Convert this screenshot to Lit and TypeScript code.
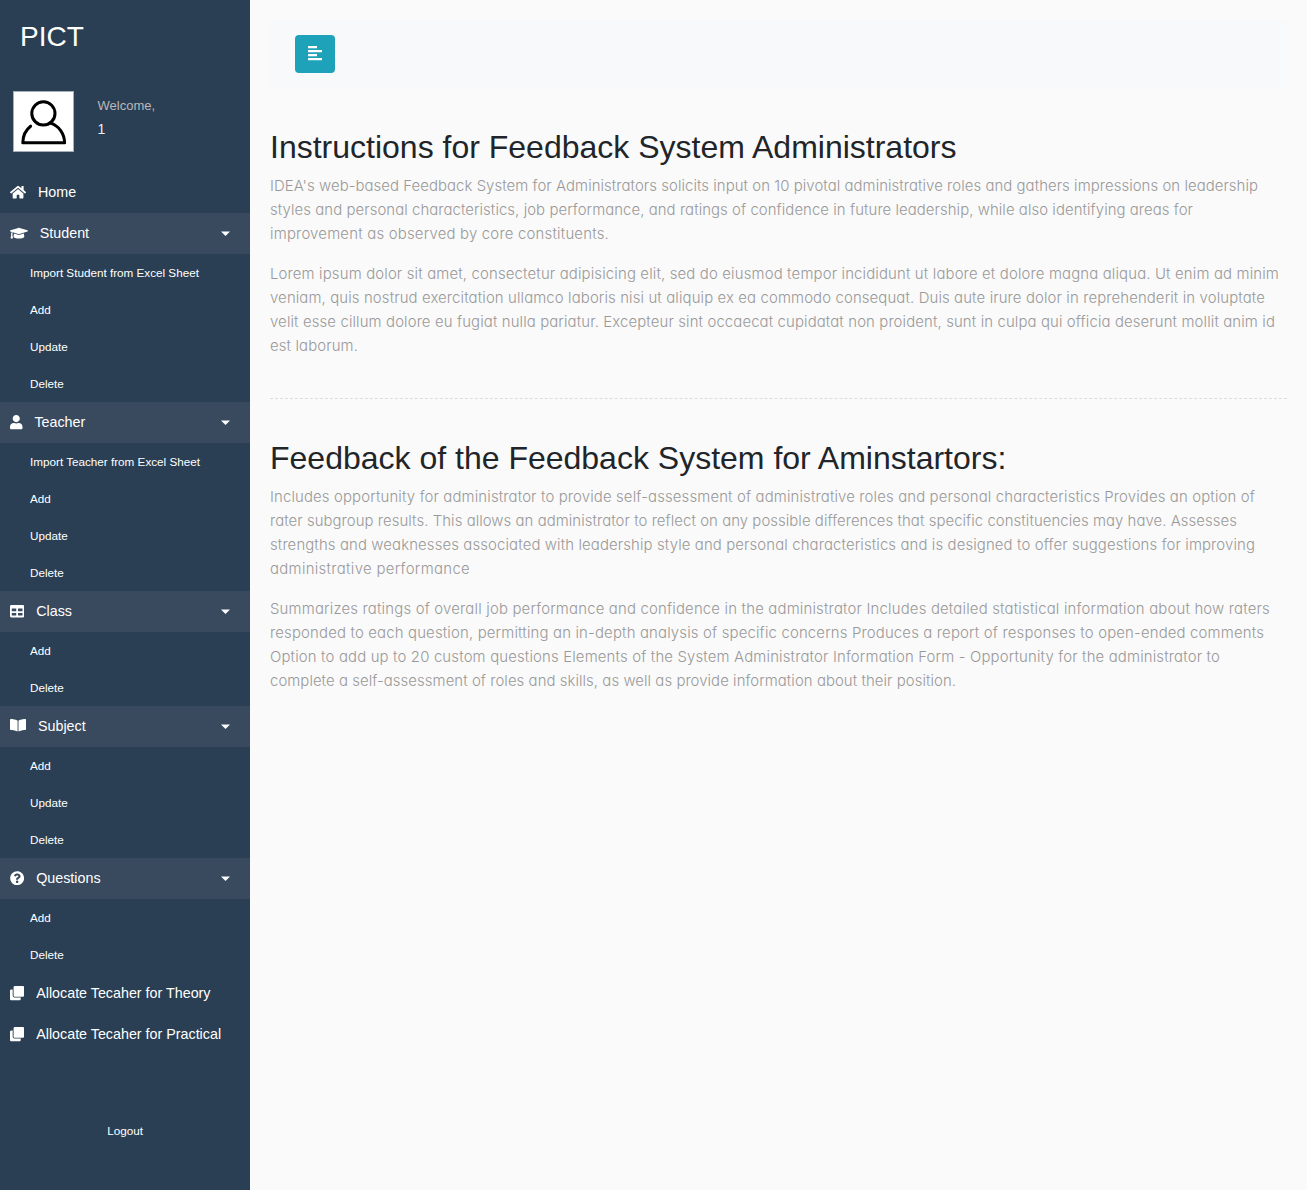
import { LitElement, html, css, svg } from "lit";
import { customElement, property } from "lit/decorators.js";

const ICONS: Record<string, [number, string]> = {
  home: [576, "M280.37 148.26L96 300.11V464a16 16 0 0 0 16 16l112.06-.29a16 16 0 0 0 15.92-16V368a16 16 0 0 1 16-16h64a16 16 0 0 1 16 16v95.64a16 16 0 0 0 16 16.05L464 480a16 16 0 0 0 16-16V300L295.67 148.26a12.19 12.19 0 0 0-15.3 0zM571.6 251.47L488 182.56V44.05a12 12 0 0 0-12-12h-56a12 12 0 0 0-12 12v72.61L318.47 43a48 48 0 0 0-61 0L4.34 251.47a12 12 0 0 0-1.6 16.9l25.5 31A12 12 0 0 0 45.15 301l235.22-193.74a12.19 12.19 0 0 1 15.3 0L530.9 301a12 12 0 0 0 16.9-1.6l25.5-31a12 12 0 0 0-1.7-16.93z"],
  cap: [640, "M622.34 153.2L343.4 67.5c-15.2-4.67-31.6-4.67-46.79 0L17.66 153.2c-23.54 7.23-23.54 38.36 0 45.59l48.63 14.94c-10.67 13.19-17.23 29.28-17.88 46.9C38.78 266.15 32 276.11 32 288c0 10.78 5.68 19.85 13.86 25.65L20.33 428.53C18.11 438.52 25.71 448 35.94 448h56.11c10.24 0 17.84-9.48 15.62-19.47L82.14 313.65C90.32 307.85 96 298.78 96 288c0-11.57-6.47-21.25-15.66-26.87.76-15.02 8.44-28.3 20.69-36.72L296.6 284.5c9.06 2.78 26.44 6.25 46.79 0l278.95-85.7c23.55-7.24 23.55-38.36 0-45.6zM352.79 315.09c-28.53 8.76-52.84 3.92-65.59 0l-145.02-44.55L128 384c0 35.35 85.96 64 192 64s192-28.65 192-64l-14.18-113.47-145.03 44.56z"],
  user: [448, "M224 256c70.7 0 128-57.3 128-128S294.7 0 224 0 96 57.3 96 128s57.3 128 128 128zm89.6 32h-16.7c-22.2 10.2-46.9 16-72.9 16s-50.6-5.8-72.9-16h-16.7C60.2 288 0 348.2 0 422.4V464c0 26.5 21.5 48 48 48h352c26.5 0 48-21.5 48-48v-41.6c0-74.2-60.2-134.4-134.4-134.4z"],
  table: [512, "M464 32H48C21.49 32 0 53.49 0 80v352c0 26.51 21.49 48 48 48h416c26.51 0 48-21.49 48-48V80c0-26.51-21.49-48-48-48zM224 416H64v-96h160v96zm0-160H64v-96h160v96zm224 160H288v-96h160v96zm0-160H288v-96h160v96z"],
  book: [576, "M542.22 32.05c-54.8 3.11-163.72 14.43-230.96 55.59-4.64 2.84-7.27 7.89-7.27 13.17v363.87c0 11.55 12.63 18.85 23.28 13.49 69.18-34.82 169.23-44.32 218.7-46.92 16.89-.89 30.02-14.43 30.02-30.66V62.75c.01-17.71-15.35-31.74-33.77-30.7zM264.73 87.64C197.5 46.48 88.58 35.17 33.78 32.05 15.36 31.01 0 45.04 0 62.75V400.6c0 16.24 13.13 29.78 30.02 30.66 49.49 2.6 149.59 12.11 218.77 46.95 10.62 5.35 23.21-1.94 23.21-13.46V100.63c0-5.29-2.62-10.14-7.27-12.99z"],
  question: [512, "M504 256c0 136.997-111.043 248-248 248S8 392.997 8 256C8 119.083 119.043 8 256 8s248 111.083 248 248zM262.655 90c-54.497 0-89.255 22.957-116.549 63.758-3.536 5.286-2.353 12.415 2.715 16.258l34.699 26.31c5.205 3.947 12.621 3.008 16.665-2.122 17.864-22.658 30.113-35.797 57.303-35.797 20.429 0 45.698 13.148 45.698 32.958 0 14.976-12.363 22.667-32.534 33.976C247.128 238.528 216 254.941 216 296v4c0 6.627 5.373 12 12 12h56c6.627 0 12-5.373 12-12v-1.333c0-28.462 83.186-29.647 83.186-106.667 0-58.002-60.165-102-116.531-102zM256 338c-25.365 0-46 20.635-46 46 0 25.364 20.635 46 46 46s46-20.636 46-46c0-25.365-20.635-46-46-46z"],
  clone: [512, "M464 0c26.51 0 48 21.49 48 48v288c0 26.51-21.49 48-48 48H176c-26.51 0-48-21.49-48-48V48c0-26.51 21.49-48 48-48h288M176 416c-44.112 0-80-35.888-80-80V128H48c-26.51 0-48 21.49-48 48v288c0 26.51 21.49 48 48 48h288c26.51 0 48-21.49 48-48v-48H176z"],
};

interface Entry { icon: string; label: string; children?: string[]; }

const MENU: Entry[] = [
  { icon: "home", label: "Home" },
  { icon: "cap", label: "Student", children: ["Import Student from Excel Sheet", "Add", "Update", "Delete"] },
  { icon: "user", label: "Teacher", children: ["Import Teacher from Excel Sheet", "Add", "Update", "Delete"] },
  { icon: "table", label: "Class", children: ["Add", "Delete"] },
  { icon: "book", label: "Subject", children: ["Add", "Update", "Delete"] },
  { icon: "question", label: "Questions", children: ["Add", "Delete"] },
  { icon: "clone", label: "Allocate Tecaher for Theory" },
  { icon: "clone", label: "Allocate Tecaher for Practical" },
];

type Line = [string, number];
interface Section { title: string; paragraphs: Line[][]; }

// Each line carries its measure in pixels.
const SECTIONS: Section[] = [
  {
    title: "Instructions for Feedback System Administrators",
    paragraphs: [
      [
        ["IDEA's web-based Feedback System for Administrators solicits input on 10 pivotal administrative roles and gathers impressions on leadership", 988],
        ["styles and personal characteristics, job performance, and ratings of confidence in future leadership, while also identifying areas for", 923],
        ["improvement as observed by core constituents.", 339],
      ],
      [
        ["Lorem ipsum dolor sit amet, consectetur adipisicing elit, sed do eiusmod tempor incididunt ut labore et dolore magna aliqua. Ut enim ad minim", 1009],
        ["veniam, quis nostrud exercitation ullamco laboris nisi ut aliquip ex ea commodo consequat. Duis aute irure dolor in reprehenderit in voluptate", 995],
        ["velit esse cillum dolore eu fugiat nulla pariatur. Excepteur sint occaecat cupidatat non proident, sunt in culpa qui officia deserunt mollit anim id", 1005],
        ["est laborum.", 88],
      ],
    ],
  },
  {
    title: "Feedback of the Feedback System for Aminstartors:",
    paragraphs: [
      [
        ["Includes opportunity for administrator to provide self-assessment of administrative roles and personal characteristics Provides an option of", 985],
        ["rater subgroup results. This allows an administrator to reflect on any possible differences that specific constituencies may have. Assesses", 967],
        ["strengths and weaknesses associated with leadership style and personal characteristics and is designed to offer suggestions for improving", 985],
        ["administrative performance", 200],
      ],
      [
        ["Summarizes ratings of overall job performance and confidence in the administrator Includes detailed statistical information about how raters", 1000],
        ["responded to each question, permitting an in-depth analysis of specific concerns Produces a report of responses to open-ended comments", 994],
        ["Option to add up to 20 custom questions Elements of the System Administrator Information Form - Opportunity for the administrator to", 950],
        ["complete a self-assessment of roles and skills, as well as provide information about their position.", 686],
      ],
    ],
  },
];

/** One line of copy, tracked so that it fills its measure. */
@customElement("copy-line")
class CopyLine extends LitElement {
  @property() text = "";
  @property({ type: Number }) measure = 0;

  static styles = css`
    :host { display: block; height: 24px; white-space: nowrap; }
    .run { display: inline-block; }
  `;

  firstUpdated() {
    this.fit();
    document.fonts?.ready.then(() => this.fit());
  }

  private fit() {
    const run = this.renderRoot.querySelector<HTMLElement>(".run")!;
    run.style.letterSpacing = "0px";
    const gap = this.measure - run.getBoundingClientRect().width;
    run.style.letterSpacing = `${gap / this.text.length}px`;
  }

  render() {
    return html`<span class="run">${this.text}</span>`;
  }
}

@customElement("app-root")
class AppRoot extends LitElement {
  static styles = css`
    :host {
      display: flex;
      min-height: 1190px;
      background: #fafafa;
      font-family: "Liberation Sans", Arial, sans-serif;
      color: #212529;
    }
    * { box-sizing: border-box; }
    h2, h3, p, ul { margin: 0; padding: 0; font-weight: 400; }
    ul { list-style: none; }
    svg { display: block; flex: none; }

    .sidebar { width: 250px; flex: none; background: #2a3f54; color: #fff; }
    .brand { padding: 20px; font-size: 28px; line-height: 34px; height: 91px; }
    .profile { display: flex; height: 81px; padding-left: 13px; }
    .avatar { width: 61px; height: 61px; background: #fff; border: 1px solid #a3afba; }
    .hello { padding: 5px 0 0 23.5px; }
    .welcome { font-size: 13px; line-height: 20px; color: #bab8b8; }
    .name { font-size: 14px; line-height: 26px; color: #ecf0f1; }

    .item { display: flex; align-items: center; gap: 11.9px; height: 41px; padding: 0 20px 0 10px; font-size: 14.3px; line-height: 21px; }
    .item.group { background: #394a5e; }
    .item .caret { margin-left: auto; }
    .icon.book { margin-bottom: 2px; }
    .sub { height: 37px; padding: 10px 0 0 30px; font-size: 11.7px; line-height: 18px; }
    .logout { padding-top: 67px; text-align: center; font-size: 11.7px; line-height: 18px; }

    .content { flex: 1; min-width: 0; padding: 20px; }
    .navbar { height: 68px; padding: 15px 25px; background: #f8f9fb; margin-bottom: 40px; }
    .toggle { display: flex; align-items: center; justify-content: center; width: 40px; height: 38px; padding: 0; border: 0; border-radius: 4px; background: #1da2b9; }
    .title { font-size: 32px; line-height: 38px; margin-bottom: 8px; }
    .copy { margin-bottom: 16px; font-family: Inter, sans-serif; font-weight: 300; font-size: 14.9px; line-height: 24px; color: #999; font-feature-settings: "cv11" 1; }
    .divider { margin: 40px 0; border-bottom: 1px dashed #ddd; }
    section .copy:last-child { margin-bottom: 40px; }
  `;

  private icon(name: string) {
    const [w, d] = ICONS[name];
    return html`<svg class="icon ${name}" width=${(w / 512) * 14.3} height="14.3" viewBox="0 0 ${w} 512" fill="currentColor">${svg`<path d=${d} />`}</svg>`;
  }

  private entry(e: Entry) {
    return html`
      <li>
        <div class="item ${e.children ? "group" : ""}">
          ${this.icon(e.icon)}<span>${e.label}</span>
          ${e.children
            ? html`<svg class="caret" width="9" height="5" viewBox="0 0 9 5" fill="currentColor"><path d="M0 .6H9L4.5 5Z" /></svg>`
            : null}
        </div>
        ${e.children ? html`<ul>${e.children.map((c) => html`<li class="sub">${c}</li>`)}</ul>` : null}
      </li>
    `;
  }

  render() {
    return html`
      <nav class="sidebar">
        <h3 class="brand">PICT</h3>
        <div class="profile">
          <svg class="avatar" viewBox="0 0 59 59" fill="none" stroke="#000" stroke-width="3" stroke-linecap="round" stroke-linejoin="round">
            <circle cx="29.4" cy="21.4" r="11.6" />
            <path d="M16.6 34.2C12 37.7 8.9 43.7 8.8 50.8H50.6C50.4 41.7 45 34 36.8 31.2" />
          </svg>
          <div class="hello">
            <div class="welcome">Welcome,</div>
            <div class="name">1</div>
          </div>
        </div>
        <ul>${MENU.map((e) => this.entry(e))}</ul>
        <div class="logout">Logout</div>
      </nav>
      <main class="content">
        <div class="navbar">
          <button class="toggle" aria-label="Toggle menu">
            <svg width="14" height="16" viewBox="0 0 14 16" fill="#fff">
              <path d="M0 0H9V2.3H0ZM0 4H14V6.3H0ZM0 8H9V10.3H0ZM0 12H14V14.3H0Z" />
            </svg>
          </button>
        </div>
        ${SECTIONS.map(
          (s, i) => html`
            <section>
              <h2 class="title">${s.title}</h2>
              ${s.paragraphs.map(
                (p) => html`<p class="copy">${p.map(([t, w]) => html`<copy-line .text=${t} .measure=${w}></copy-line>`)}</p>`
              )}
            </section>
            ${i === 0 ? html`<div class="divider"></div>` : null}
          `
        )}
      </main>
    `;
  }
}
